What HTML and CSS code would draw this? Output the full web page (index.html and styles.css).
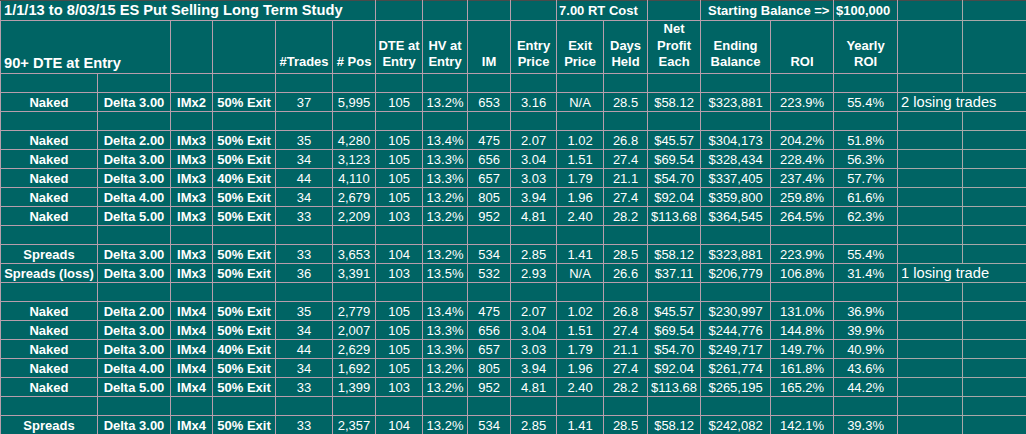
FILE: index.html
```html
<!DOCTYPE html>
<html>
<head>
<meta charset="utf-8">
<link rel="stylesheet" href="styles.css">
</head>
<body>
<table class="sheet">
  <colgroup>
    <col style="width:97px"><col style="width:73px"><col style="width:42px"><col style="width:63px">
    <col style="width:57px"><col style="width:43px"><col style="width:47px"><col style="width:45px">
    <col style="width:43px"><col style="width:46px"><col style="width:47px"><col style="width:44px">
    <col style="width:53px"><col style="width:70px"><col style="width:63px"><col style="width:64px">
    <col style="width:65px"><col style="width:64px">
  </colgroup>
  <tr class="title-row">
    <td colspan="6" class="title">1/1/13 to 8/03/15 ES Put Selling Long Term Study</td>
    <td></td><td></td><td></td><td></td>
    <td colspan="2" class="label">7.00 RT Cost</td>
    <td></td>
    <td colspan="2" class="label label-start">Starting Balance =&gt;</td>
    <td class="label">$100,000</td>
    <td class="g"></td><td class="g"></td>
  </tr>
  <tr class="head-row">
    <td colspan="2" class="title">90+ DTE at Entry</td>
    <td></td><td></td>
    <td class="hd">#Trades</td>
    <td class="hd"># Pos</td>
    <td class="hd">DTE at<br>Entry</td>
    <td class="hd">HV at<br>Entry</td>
    <td class="hd">IM</td>
    <td class="hd">Entry<br>Price</td>
    <td class="hd">Exit<br>Price</td>
    <td class="hd">Days<br>Held</td>
    <td class="hd">Net<br>Profit<br>Each</td>
    <td class="hd">Ending<br>Balance</td>
    <td class="hd">ROI</td>
    <td class="hd">Yearly<br>ROI</td>
    <td class="g"></td><td class="g"></td>
  </tr>
  <tr class="blank"><td></td><td></td><td></td><td></td><td></td><td></td><td></td><td></td><td></td><td></td><td></td><td></td><td></td><td></td><td></td><td></td><td class="g"></td><td class="g"></td></tr>
  <tr>
    <td class="b">Naked</td><td class="b">Delta 3.00</td><td class="b">IMx2</td><td class="b">50% Exit</td>
    <td>37</td><td>5,995</td><td>105</td><td>13.2%</td><td>653</td><td>3.16</td><td>N/A</td><td>28.5</td><td>$58.12</td><td>$323,881</td><td>223.9%</td><td>55.4%</td>
    <td colspan="2" class="g note">2 losing trades</td>
  </tr>
  <tr class="blank"><td></td><td></td><td></td><td></td><td></td><td></td><td></td><td></td><td></td><td></td><td></td><td></td><td></td><td></td><td></td><td></td><td class="g"></td><td class="g"></td></tr>
  <tr>
    <td class="b">Naked</td><td class="b">Delta 2.00</td><td class="b">IMx3</td><td class="b">50% Exit</td>
    <td>35</td><td>4,280</td><td>105</td><td>13.4%</td><td>475</td><td>2.07</td><td>1.02</td><td>26.8</td><td>$45.57</td><td>$304,173</td><td>204.2%</td><td>51.8%</td>
    <td class="g"></td><td class="g"></td>
  </tr>
  <tr>
    <td class="b">Naked</td><td class="b">Delta 3.00</td><td class="b">IMx3</td><td class="b">50% Exit</td>
    <td>34</td><td>3,123</td><td>105</td><td>13.3%</td><td>656</td><td>3.04</td><td>1.51</td><td>27.4</td><td>$69.54</td><td>$328,434</td><td>228.4%</td><td>56.3%</td>
    <td class="g"></td><td class="g"></td>
  </tr>
  <tr>
    <td class="b">Naked</td><td class="b">Delta 3.00</td><td class="b">IMx3</td><td class="b">40% Exit</td>
    <td>44</td><td>4,110</td><td>105</td><td>13.3%</td><td>657</td><td>3.03</td><td>1.79</td><td>21.1</td><td>$54.70</td><td>$337,405</td><td>237.4%</td><td>57.7%</td>
    <td class="g"></td><td class="g"></td>
  </tr>
  <tr>
    <td class="b">Naked</td><td class="b">Delta 4.00</td><td class="b">IMx3</td><td class="b">50% Exit</td>
    <td>34</td><td>2,679</td><td>105</td><td>13.2%</td><td>805</td><td>3.94</td><td>1.96</td><td>27.4</td><td>$92.04</td><td>$359,800</td><td>259.8%</td><td>61.6%</td>
    <td class="g"></td><td class="g"></td>
  </tr>
  <tr>
    <td class="b">Naked</td><td class="b">Delta 5.00</td><td class="b">IMx3</td><td class="b">50% Exit</td>
    <td>33</td><td>2,209</td><td>103</td><td>13.2%</td><td>952</td><td>4.81</td><td>2.40</td><td>28.2</td><td>$113.68</td><td>$364,545</td><td>264.5%</td><td>62.3%</td>
    <td class="g"></td><td class="g"></td>
  </tr>
  <tr class="blank"><td></td><td></td><td></td><td></td><td></td><td></td><td></td><td></td><td></td><td></td><td></td><td></td><td></td><td></td><td></td><td></td><td class="g"></td><td class="g"></td></tr>
  <tr>
    <td class="b">Spreads</td><td class="b">Delta 3.00</td><td class="b">IMx3</td><td class="b">50% Exit</td>
    <td>33</td><td>3,653</td><td>104</td><td>13.2%</td><td>534</td><td>2.85</td><td>1.41</td><td>28.5</td><td>$58.12</td><td>$323,881</td><td>223.9%</td><td>55.4%</td>
    <td class="g"></td><td class="g"></td>
  </tr>
  <tr>
    <td class="b">Spreads (loss)</td><td class="b">Delta 3.00</td><td class="b">IMx3</td><td class="b">50% Exit</td>
    <td>36</td><td>3,391</td><td>103</td><td>13.5%</td><td>532</td><td>2.93</td><td>N/A</td><td>26.6</td><td>$37.11</td><td>$206,779</td><td>106.8%</td><td>31.4%</td>
    <td colspan="2" class="g note">1 losing trade</td>
  </tr>
  <tr class="blank"><td></td><td></td><td></td><td></td><td></td><td></td><td></td><td></td><td></td><td></td><td></td><td></td><td></td><td></td><td></td><td></td><td class="g"></td><td class="g"></td></tr>
  <tr>
    <td class="b">Naked</td><td class="b">Delta 2.00</td><td class="b">IMx4</td><td class="b">50% Exit</td>
    <td>35</td><td>2,779</td><td>105</td><td>13.4%</td><td>475</td><td>2.07</td><td>1.02</td><td>26.8</td><td>$45.57</td><td>$230,997</td><td>131.0%</td><td>36.9%</td>
    <td class="g"></td><td class="g"></td>
  </tr>
  <tr>
    <td class="b">Naked</td><td class="b">Delta 3.00</td><td class="b">IMx4</td><td class="b">50% Exit</td>
    <td>34</td><td>2,007</td><td>105</td><td>13.3%</td><td>656</td><td>3.04</td><td>1.51</td><td>27.4</td><td>$69.54</td><td>$244,776</td><td>144.8%</td><td>39.9%</td>
    <td class="g"></td><td class="g"></td>
  </tr>
  <tr>
    <td class="b">Naked</td><td class="b">Delta 3.00</td><td class="b">IMx4</td><td class="b">40% Exit</td>
    <td>44</td><td>2,629</td><td>105</td><td>13.3%</td><td>657</td><td>3.03</td><td>1.79</td><td>21.1</td><td>$54.70</td><td>$249,717</td><td>149.7%</td><td>40.9%</td>
    <td class="g"></td><td class="g"></td>
  </tr>
  <tr>
    <td class="b">Naked</td><td class="b">Delta 4.00</td><td class="b">IMx4</td><td class="b">50% Exit</td>
    <td>34</td><td>1,692</td><td>105</td><td>13.2%</td><td>805</td><td>3.94</td><td>1.96</td><td>27.4</td><td>$92.04</td><td>$261,774</td><td>161.8%</td><td>43.6%</td>
    <td class="g"></td><td class="g"></td>
  </tr>
  <tr>
    <td class="b">Naked</td><td class="b">Delta 5.00</td><td class="b">IMx4</td><td class="b">50% Exit</td>
    <td>33</td><td>1,399</td><td>103</td><td>13.2%</td><td>952</td><td>4.81</td><td>2.40</td><td>28.2</td><td>$113.68</td><td>$265,195</td><td>165.2%</td><td>44.2%</td>
    <td class="g"></td><td class="g"></td>
  </tr>
  <tr class="blank"><td></td><td></td><td></td><td></td><td></td><td></td><td></td><td></td><td></td><td></td><td></td><td></td><td></td><td></td><td></td><td></td><td class="g"></td><td class="g"></td></tr>
  <tr>
    <td class="b">Spreads</td><td class="b">Delta 3.00</td><td class="b">IMx4</td><td class="b">50% Exit</td>
    <td>33</td><td>2,357</td><td>104</td><td>13.2%</td><td>534</td><td>2.85</td><td>1.41</td><td>28.5</td><td>$58.12</td><td>$242,082</td><td>142.1%</td><td>39.3%</td>
    <td class="g"></td><td class="g"></td>
  </tr>
</table>
</body>
</html>
```
FILE: styles.css
```css
html, body {
  margin: 0;
  padding: 0;
  background: #006464;
}

.sheet {
  table-layout: fixed;
  width: 1026px;
  border-collapse: collapse;
  font-family: "Liberation Sans", Arial, sans-serif;
  font-size: 13px;
  color: #ffffff;
  background: #006464;
  border-top: 1px solid #4a4a4a;
}

.sheet tr {
  height: 19px;
}

.sheet td {
  border: 1px solid #b89eac;
  padding: 0 1px 1px 1px;
  line-height: 15px;
  text-align: center;
  vertical-align: bottom;
  white-space: nowrap;
  overflow: visible;
}

.sheet tr:first-child td {
  border-top: 1px solid #4a4a4a;
}

.sheet tr:last-child td {
  border-bottom: 1px solid #9a8ea6;
}

.sheet td.g {
  border-color: #a8a8a8;
}

.sheet td:last-child {
  border-right: 1px solid #8a8a8a;
}

.sheet .title-row {
  height: 20px;
}

.sheet .head-row {
  height: 52px;
}

.sheet td.title {
  text-align: left;
  font-weight: bold;
  font-size: 14.67px;
  padding-left: 3px;
  padding-bottom: 2px;
  line-height: 16px;
}

.sheet td.label {
  text-align: left;
  font-weight: bold;
  padding-left: 2px;
  padding-bottom: 2px;
}

.sheet td.label-start {
  padding-left: 7px;
}

.sheet td.hd {
  font-weight: bold;
  line-height: 16.5px;
  padding-bottom: 2px;
}

.sheet td.b {
  font-weight: bold;
}

.sheet td.note {
  text-align: left;
  font-size: 14.67px;
  padding-left: 3px;
  line-height: 15px;
}
```
